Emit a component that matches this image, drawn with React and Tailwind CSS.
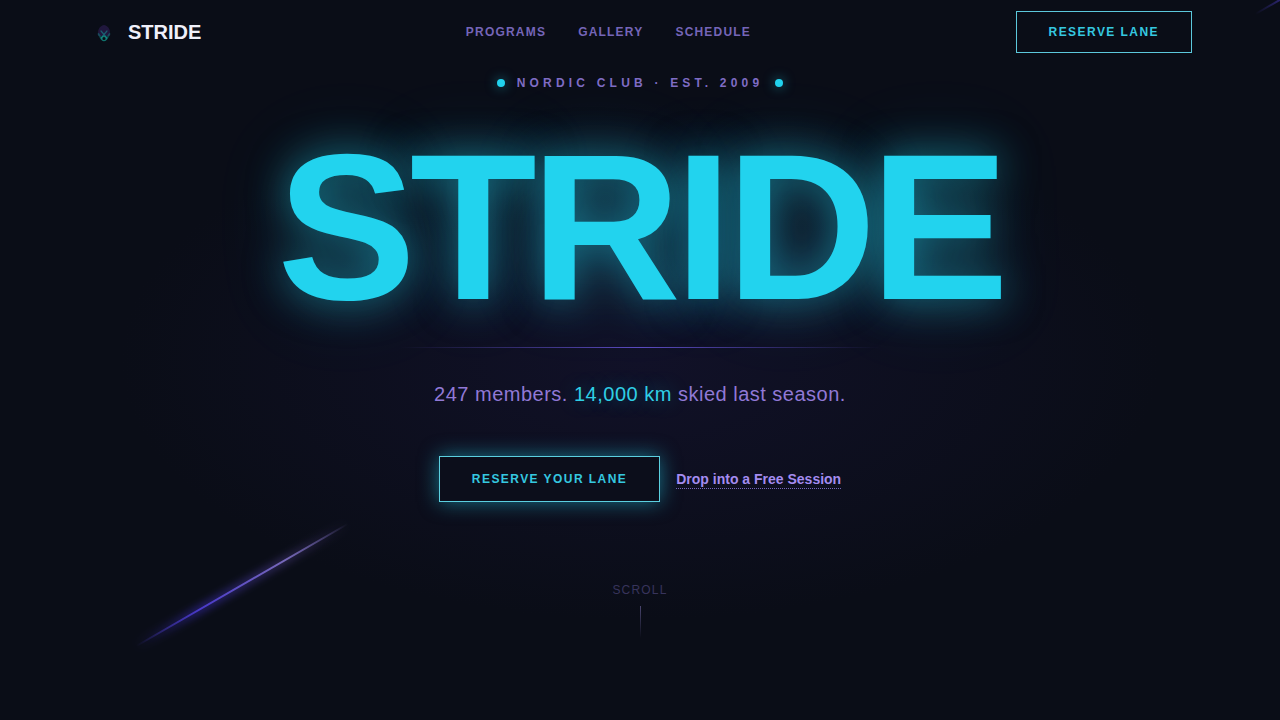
import React from 'react';

const links = [
  { label: 'Programs', href: '#programs' },
  { label: 'Gallery', href: '#gallery' },
  { label: 'Schedule', href: '#schedule' },
];

const Logo = () => (
  <svg viewBox="0 0 32 32" className="w-8 h-8" fill="none" strokeLinecap="round" aria-hidden="true">
    <path d="M10.500 20C9 15 11 10 16 9C21 10 23 15 21.500 20Z" fill="#33205c" opacity="0.55" />
    <path d="M10.500 18L13.500 23M21.500 18L18.500 23" stroke="#149a94" strokeWidth="1.800" opacity="0.4" />
    <path d="M13 15L16 18.500L19 15M16 18.500L13 22M16 18.500L19 22" stroke="#16a3a0" strokeWidth="1.200" opacity="0.5" />
    <circle cx="16" cy="22.500" r="2.200" stroke="#14b8a6" strokeWidth="1.200" opacity="0.6" />
  </svg>
);

const Dot = () => (
  <span className="w-2 h-2 rounded-full bg-[#22d3ee] shadow-[0_0_12px_#22d3ee99]" />
);

const Nav = () => (
  <header className="relative">
    <div className="max-w-6xl mx-auto px-6 h-16 flex items-center justify-between">
      <a href="#top" className="flex items-center gap-2">
        <Logo />
        <span className="text-xl font-bold text-[#f0f0fa]">STRIDE</span>
      </a>
      <nav className="flex gap-8">
        {links.map((link) => (
          <a key={link.href} href={link.href} className="text-xs font-bold uppercase tracking-widest text-[#7565b8]">
            {link.label}
          </a>
        ))}
      </nav>
      <button type="button" className="border border-[#5cc8dc] px-8 py-3 text-xs font-bold uppercase tracking-[0.12em] text-[#35c8e0]">
        Reserve Lane
      </button>
    </div>
  </header>
);

const Hero = () => (
  <main className="relative flex flex-col items-center px-6 pt-[11px] pb-20 text-center">
    <div className="flex items-center gap-3">
      <Dot />
      <p className="text-xs font-bold uppercase tracking-[0.35em] text-[#7f6cc4]">Nordic Club · Est. 2009</p>
      <Dot />
    </div>

    <h1 className="mt-12 text-[208px] leading-[176px] font-bold tracking-[-0.03em] text-[#22d3ee] [text-shadow:0_0_40px_#22d3ee80,0_0_80px_#22d3ee33]">
      STRIDE
    </h1>

    <div className="mt-8 w-full max-w-[480px] h-px bg-linear-to-r from-transparent via-[#5a4bc0] to-transparent" />

    <p className="mt-8 text-xl tracking-wide text-[#9179d6]">
      247 members.{' '}
      <span className="text-[#2fcfe6] [text-shadow:0_0_20px_#22d3ee66]">14,000 km</span>{' '}
      skied last season.
    </p>

    <div className="mt-12 flex items-center gap-4">
      <button
        type="button"
        className="border border-[#5cd0e0] bg-[#0c0e1b] px-8 py-3.5 text-xs font-bold uppercase tracking-[0.12em] text-[#35c8e0] shadow-[0_0_20px_#22d3ee80]"
      >
        Reserve Your Lane
      </button>
      <a href="#session" className="border-b border-dotted border-[#7565b8] text-sm leading-[18px] font-bold text-[#a48cf0]">
        Drop into a Free Session
      </a>
    </div>

    <div className="mt-20 flex flex-col items-center gap-2">
      <span className="text-xs uppercase tracking-widest text-[#38345c]">Scroll</span>
      <span className="w-px h-8 bg-linear-to-b from-[#4a4670] to-transparent" />
    </div>
  </main>
);

// light trails behind the hero
const Trails = () => (
  <div className="absolute inset-0 overflow-hidden pointer-events-none" aria-hidden="true">
    <div className="absolute left-[120px] bottom-[134px] w-[244px] h-0.5 -rotate-[30deg] bg-[linear-gradient(90deg,transparent,#4f3fd0_30%,#8f80d8_70%,transparent)]" />
    <div className="absolute left-[120px] bottom-[133px] w-[244px] h-1 -rotate-[30deg] blur-xs bg-[linear-gradient(90deg,transparent,#3d2fc0_30%,#4a3c80_70%,transparent)]" />
    <div className="absolute -right-[162px] -top-[37px] w-[200px] h-0.5 -rotate-[30deg] bg-[linear-gradient(90deg,transparent,#4f3fd0_30%,transparent)]" />
  </div>
);

export default function App() {
  return (
    <div
      id="top"
      className="relative min-h-screen overflow-hidden bg-[#0a0d17] bg-[radial-gradient(ellipse_520px_260px_at_50%_50%,#111128,#0a0d17)] font-['Liberation_Sans',Arial,sans-serif]"
    >
      <Trails />
      <Nav />
      <Hero />
    </div>
  );
}
